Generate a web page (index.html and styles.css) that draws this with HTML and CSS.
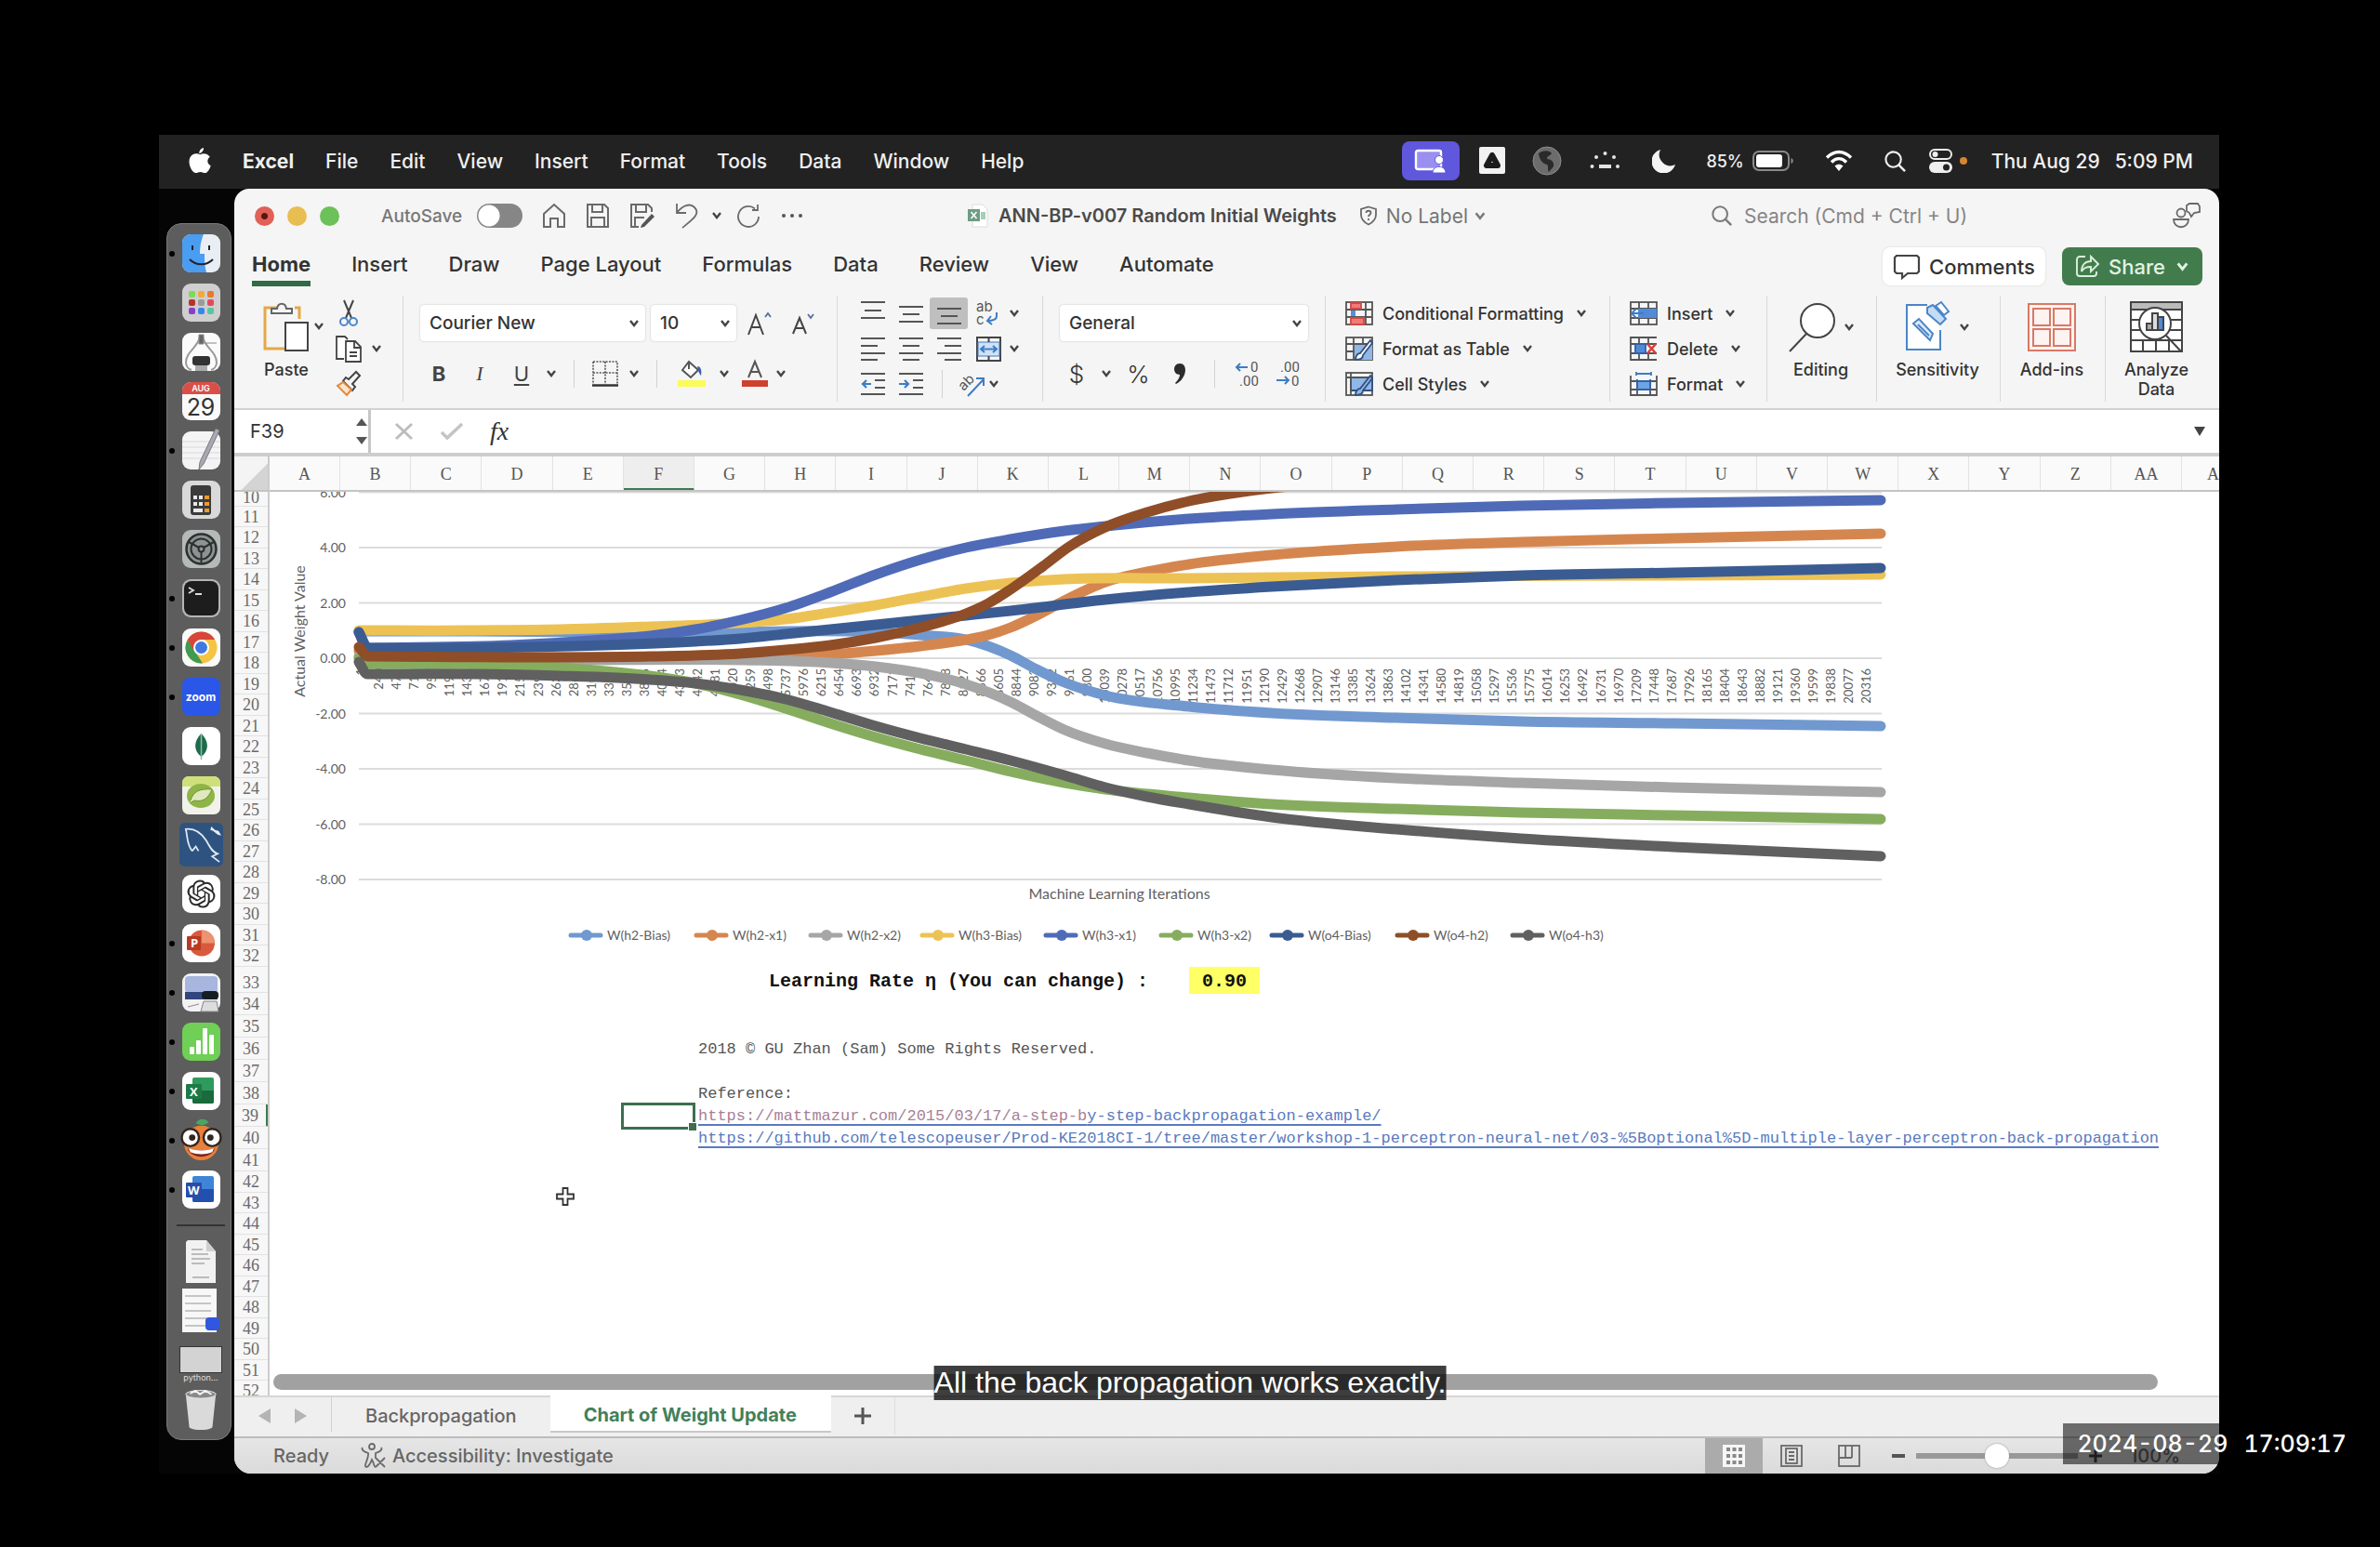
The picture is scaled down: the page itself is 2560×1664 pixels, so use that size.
FILE: index.html
```html
<!DOCTYPE html>
<html lang="en">
<head>
<meta charset="utf-8">
<title>ANN-BP-v007 Random Initial Weights</title>
<link rel="stylesheet" href="styles.css">
</head>
<body>
<svg class="defs" aria-hidden="true">
  <symbol id="chev" viewBox="0 0 12 10"><path d="M2 2l4 5 4-5" fill="none" stroke="currentColor" stroke-width="2.4"/></symbol>
  <symbol id="lens" viewBox="0 0 26 26"><circle cx="11" cy="11" r="8.5" fill="none" stroke="currentColor" stroke-width="2.2"/><path d="M17 17l7 7" stroke="currentColor" stroke-width="2.6"/></symbol>
</svg>

<div class="desktop">
  <header class="menubar">
    <nav class="menus">
      <svg class="apple" viewBox="0 0 24 29"><path fill="#fff" d="M16 0c.3 2.600-1.900 5.700-4.700 5.900C11 3.300 13.400.4 16 0zM22.800 9.800c-3.500 2.200-3.300 7.700.9 9.400-1 3.600-3.500 7.800-6.300 7.900-1.900 0-2.700-1.200-4.900-1.200s-3 1.200-4.800 1.200C4.500 27.200.5 20.500.5 15.200c0-9 8-10 11.800-7.900 3-1.700 7.800-1.500 10.500 2.500z"/></svg>
      <b>Excel</b><span>File</span><span>Edit</span><span>View</span><span>Insert</span><span>Format</span><span>Tools</span><span>Data</span><span>Window</span><span>Help</span>
    </nav>
    <div class="tray">
      <span class="sharing"><svg width="36" height="26" viewBox="0 0 36 26"><rect x="2" y="2" width="27" height="20" rx="2" fill="#9a90f0" stroke="#fff" stroke-width="2.400"/><path d="M20 26c0-9 14-9 14 0z" fill="#fff" stroke="#5f57dc"/><circle cx="27" cy="12" r="4.500" fill="#fff" stroke="#5f57dc"/></svg></span>
      <svg width="28" height="30" viewBox="0 0 28 30"><rect width="28" height="29" rx="2" fill="#f2f2f2"/><path d="M14 9L8 20h12z" fill="none" stroke="#1c1c1c" stroke-width="6" stroke-linejoin="round"/></svg>
      <svg class="globe" width="32" height="32" viewBox="0 0 32 32"><circle cx="16" cy="16" r="15" fill="#6c6c6c" stroke="#8c8c8c"/><path d="M7 8c6-4 12-3 14 0-2 3-5 2-5 6 5 0 8 4 7 8l-5 6c-2-3 0-6-2-8-5-1-8-5-9-12z" fill="#2a2a2a"/></svg>
      <svg class="dots" width="33" height="22" viewBox="0 0 33 22" fill="#e4e4e4"><circle cx="16.500" cy="3" r="2"/><circle cx="7" cy="7" r="2"/><circle cx="26" cy="7" r="2"/><circle cx="2.500" cy="17" r="2"/><circle cx="30" cy="17" r="2"/><rect x="10" y="15" width="13" height="4"/></svg>
      <svg class="moon" width="26" height="26" viewBox="0 0 26 26"><path d="M9 1a13 13 0 1 0 16 16A12 12 0 0 1 9 1z" fill="#f4f4f4"/></svg>
      <span class="battery">85%<svg width="45" height="24" viewBox="0 0 45 24"><rect x="1" y="2" width="38" height="20" rx="6" fill="none" stroke="#8a8a8a" stroke-width="2"/><rect x="4" y="5" width="28" height="14" rx="3" fill="#fff"/><path d="M41.500 9v6c3-1 3-5 0-6z" fill="#8a8a8a"/></svg></span>
      <svg class="wifi" width="30" height="24" viewBox="0 0 30 24" fill="none" stroke="#fff" stroke-width="3.400"><path d="M2 8.500c8-8 18-8 26 0M7 13.500c5-5 11-5 16 0"/><path d="M15 23l-4.500-5.500c3-2.500 6-2.500 9 0z" fill="#fff" stroke="none"/></svg>
      <svg class="find" width="25" height="25"><use href="#lens"/></svg>
      <svg class="control" width="42" height="26" viewBox="0 0 42 26"><rect x="1" y="1" width="23" height="10" rx="5" fill="none" stroke="#eee" stroke-width="2"/><circle cx="6.500" cy="6" r="3" fill="#eee"/><rect x="0" y="14" width="25" height="12" rx="6" fill="#eee"/><circle cx="18.500" cy="20" r="3.500" fill="#222"/><circle cx="37" cy="13" r="4" fill="#d8862e"/></svg>
      <span class="clock"><span>Thu Aug 29</span><span>5:09 PM</span></span>
    </div>
  </header>

  <div class="stage">
    <aside class="dock">
      <span class="app on"><svg viewBox="0 0 41 41"><rect width="41" height="41" rx="9" fill="#e9eef4"/><path d="M9 0h14c-3 7-4 14-4 21h5c0 7 0 13 2 20H9a9 9 0 0 1-9-9V9a9 9 0 0 1 9-9z" fill="#4a9df0"/><path d="M11 12v5M29 12v5" stroke="#223" stroke-width="2"/><path d="M8 27c7 7 18 7 25 0" fill="none" stroke="#223" stroke-width="2"/></svg></span>
      <span class="app"><svg viewBox="0 0 41 41"><rect width="41" height="41" rx="9" fill="#cfcfcf"/><g><rect x="7" y="8" width="7" height="7" rx="2" fill="#7ed957"/><rect x="17" y="8" width="7" height="7" rx="2" fill="#f2a93b"/><rect x="27" y="8" width="7" height="7" rx="2" fill="#e8792d"/><rect x="7" y="17" width="7" height="7" rx="2" fill="#b8332b"/><rect x="17" y="17" width="7" height="7" rx="2" fill="#9b9b9b"/><rect x="27" y="17" width="7" height="7" rx="2" fill="#e5485d"/><rect x="7" y="26" width="7" height="7" rx="2" fill="#8a3fc4"/><rect x="17" y="26" width="7" height="7" rx="2" fill="#3c86e8"/><rect x="27" y="26" width="7" height="7" rx="2" fill="#56c7a0"/></g></svg></span>
      <span class="app"><svg viewBox="0 0 41 41"><rect width="41" height="41" rx="9" fill="#fbfbfb"/><path d="M19 4C17 16 4 20 4 32c0 4 3 7 6 8M22 4c2 12 15 16 15 28 0 4-3 7-6 8" fill="none" stroke="#9a9a9a" stroke-width="2"/><path d="M18 2h5v10h-5zM25 11h12" fill="#666" stroke="#888"/><rect x="11" y="25" width="19" height="10" rx="3" fill="#333"/><path d="M14 35h13v6H14z" fill="#aaa"/></svg></span>
      <span class="app cal"><small>AUG</small><em>29</em></span>
      <span class="app on"><svg viewBox="0 0 41 41"><rect width="41" height="41" rx="9" fill="#f4f4f4"/><path d="M0 11h41M0 17h41M0 23h41M0 29h41" stroke="#d8d8de"/><path d="M36-3l4 2-17 36-5 6 1-8z" fill="#a9a9b4" stroke="#77777f"/></svg></span>
      <span class="app"><svg viewBox="0 0 41 41"><rect width="41" height="41" rx="9" fill="#d9d9d9"/><rect x="9" y="5" width="22" height="32" rx="3" fill="#3b3b3b"/><g fill="#e8e8e8"><rect x="12" y="16" width="4" height="4"/><rect x="18" y="16" width="4" height="4"/><rect x="12" y="23" width="4" height="4"/><rect x="18" y="23" width="4" height="4"/><rect x="12" y="30" width="10" height="4"/></g><g fill="#ee9a2f"><rect x="24" y="16" width="5" height="4"/><rect x="24" y="23" width="5" height="4"/><rect x="24" y="30" width="5" height="4"/></g></svg></span>
      <span class="app"><svg viewBox="0 0 41 41"><rect width="41" height="41" rx="9" fill="#b5bab9"/><circle cx="20.500" cy="20.500" r="16" fill="#8d9392" stroke="#2c3030" stroke-width="2.500"/><circle cx="20.500" cy="20.500" r="11" fill="none" stroke="#2c3030" stroke-width="2"/><circle cx="20.500" cy="20.500" r="3" fill="none" stroke="#2c3030" stroke-width="2"/><path d="M20.500 23.500v12M18 19L7 13M23 19l11-6" stroke="#2c3030" stroke-width="2"/></svg></span>
      <span class="app on"><svg viewBox="0 0 41 41"><rect width="41" height="41" rx="9" fill="#b5b5b5"/><rect x="2" y="2" width="37" height="37" rx="8" fill="#1d1d1d"/><path d="M7 9l5 3-5 3M14 16h7" fill="none" stroke="#ddd" stroke-width="1.800"/></svg></span>
      <span class="app on"><svg viewBox="0 0 41 41"><rect width="41" height="41" rx="9" fill="#fafafa"/><circle cx="20.500" cy="20.500" r="17" fill="#f5c443"/><path d="M5.800 12L14 25l8 12.400A17 17 0 0 1 5.800 12z" fill="#3f9b50"/><path d="M5.800 12A17 17 0 0 1 35.200 12H20.500L13 25z" fill="#d8453a"/><circle cx="20.500" cy="20.500" r="8.500" fill="#fff"/><circle cx="20.500" cy="20.500" r="6.500" fill="#3f78e0"/></svg></span>
      <span class="app on zoom">zoom</span>
      <span class="app"><svg viewBox="0 0 41 41"><rect width="41" height="41" rx="9" fill="#fff"/><path d="M20.500 7c8 8 9 18 0 25-9-7-8-17 0-25z" fill="#1e6a4c"/><path d="M20.500 7v28" stroke="#8fbba8" stroke-width="1.500"/></svg></span>
      <span class="app"><svg viewBox="0 0 41 41"><rect width="41" height="41" rx="7" fill="#f1f3ea"/><path d="M0 11V7a7 7 0 0 1 7-7h27a7 7 0 0 1 7 7v4z" fill="#cfe07a"/><ellipse cx="20" cy="21" rx="15" ry="13" fill="#8fb447"/><path d="M9 26c3-10 10-13 23-12-4 10-10 14-19 12l-5 3" fill="#dfe9bd" stroke="#6f9432"/></svg></span>
      <span class="app"><svg class="big" viewBox="0 0 48 48"><rect width="48" height="48" rx="6" fill="#2e5380"/><path d="M14 31C8 24 9 15 7 7c8-1 16 3 22 12 4 6 6 13 13 15l-6 3 8 6M14 31l4-5 3 5" fill="none" stroke="#dfe9f3" stroke-width="1.800"/><path d="M35 4l4 4 4 1 3 5-4-1-5-4-3-1z" fill="#e6edf5"/></svg></span>
      <span class="app"><svg viewBox="0 0 41 41"><rect width="41" height="41" rx="9" fill="#fff"/><path transform="translate(5.500 5.500) scale(1.250)" fill="#2b2b2b" d="M22.282 9.821a5.985 5.985 0 0 0-.516-4.911 6.046 6.046 0 0 0-6.510-2.900A6.065 6.065 0 0 0 4.981 4.182a5.985 5.985 0 0 0-3.998 2.900 6.046 6.046 0 0 0 .743 7.097 5.980 5.980 0 0 0 .511 4.911 6.051 6.051 0 0 0 6.515 2.900A5.985 5.985 0 0 0 13.260 24a6.056 6.056 0 0 0 5.772-4.206 5.989 5.989 0 0 0 3.998-2.900 6.056 6.056 0 0 0-.748-7.073zm-9.022 12.608a4.476 4.476 0 0 1-2.876-1.041l.142-.080 4.778-2.758a.795.795 0 0 0 .393-.681v-6.737l2.020 1.169a.071.071 0 0 1 .038.052v5.583a4.504 4.504 0 0 1-4.495 4.494zm-9.661-4.125a4.471 4.471 0 0 1-.535-3.014l.142.085 4.783 2.758a.771.771 0 0 0 .781 0l5.843-3.369v2.332a.080.080 0 0 1-.033.062L9.740 19.950a4.499 4.499 0 0 1-6.141-1.646zM2.341 7.896a4.485 4.485 0 0 1 2.366-1.973V11.600a.766.766 0 0 0 .388.677l5.814 3.354-2.020 1.169a.076.076 0 0 1-.071 0l-4.830-2.787A4.504 4.504 0 0 1 2.341 7.872zm16.596 3.856L13.104 8.364 15.119 7.200a.076.076 0 0 1 .071 0l4.830 2.791a4.494 4.494 0 0 1-.677 8.104v-5.677a.790.790 0 0 0-.407-.667zm2.011-3.023l-.142-.085-4.774-2.782a.776.776 0 0 0-.785 0L9.409 9.230V6.897a.066.066 0 0 1 .028-.062l4.830-2.787a4.499 4.499 0 0 1 6.680 4.660zM8.307 12.863l-2.020-1.164a.080.080 0 0 1-.038-.057V6.074a4.499 4.499 0 0 1 7.376-3.454l-.142.081L8.704 5.459a.795.795 0 0 0-.393.681zm1.098-2.365l2.602-1.500 2.607 1.500v2.999l-2.597 1.500-2.607-1.500Z"/></svg></span>
      <span class="app on"><svg viewBox="0 0 41 41"><rect width="41" height="41" rx="9" fill="#fff"/><circle cx="21" cy="20.500" r="14" fill="#d9593c"/><path d="M21 6.500a14 14 0 0 1 14 14H21z" fill="#ee9271"/><rect x="5" y="13" width="15" height="15" rx="1" fill="#b93a20"/><text x="9" y="25" class="glyph">P</text></svg></span>
      <span class="app on"><svg viewBox="0 0 41 41"><rect width="41" height="41" rx="9" fill="#f2f2f4"/><rect x="3" y="3" width="35" height="18" rx="4" fill="#a7b6de"/><path d="M3 20h35v8H3z" fill="#32467c"/><rect x="21" y="19" width="18" height="9" rx="4" fill="#151d22"/><path d="M6 36l12-3M20 41l3-11h14l2 11z" fill="#ddd" stroke="#888"/></svg></span>
      <span class="app on"><svg viewBox="0 0 41 41"><rect width="41" height="41" rx="9" fill="#6fcf57"/><g fill="#fff"><rect x="8" y="26" width="5" height="8" rx="1"/><rect x="15" y="19" width="5" height="15" rx="1"/><rect x="22" y="6" width="5" height="28" rx="1"/><rect x="29" y="13" width="5" height="21" rx="1"/></g></svg></span>
      <span class="app on"><svg viewBox="0 0 41 41"><rect width="41" height="41" rx="9" fill="#fff"/><rect x="11" y="6" width="23" height="28" rx="2" fill="#2f9a5d"/><path d="M11 20h23v12a2 2 0 0 1-2 2H13a2 2 0 0 1-2-2z" fill="#1b6a3c"/><rect x="4" y="13" width="17" height="16" rx="1" fill="#1d7a44"/><text x="8" y="26" class="glyph">X</text></svg></span>
      <span class="app on"><svg class="big" viewBox="0 0 48 48"><path d="M18 5c4-6 10-5 14-1-4 4-9 4-14 1z" fill="#4aa564"/><circle cx="24" cy="27" r="19" fill="#e9803a"/><circle cx="12" cy="21" r="9.500" fill="#fff" stroke="#33261e" stroke-width="2.500"/><circle cx="36" cy="21" r="9.500" fill="#fff" stroke="#33261e" stroke-width="2.500"/><circle cx="14" cy="21" r="3.500" fill="#33261e"/><circle cx="34" cy="21" r="3.500" fill="#33261e"/><path d="M9 33c10 3 20 3 30 0-3 12-27 12-30 0z" fill="#7d2320"/><path d="M10 33c10 3 18 3 28 0l-2 4c-8 3-16 3-24 0z" fill="#fff"/></svg></span>
      <span class="app on"><svg viewBox="0 0 41 41"><rect width="41" height="41" rx="9" fill="#fff"/><rect x="11" y="6" width="23" height="28" rx="2" fill="#3f84d8"/><path d="M11 20h23v12a2 2 0 0 1-2 2H13a2 2 0 0 1-2-2z" fill="#2250ae"/><rect x="4" y="13" width="17" height="16" rx="1" fill="#274fa8"/><text x="6" y="26" class="glyph">W</text></svg></span>
      <hr>
      <svg class="file" viewBox="0 0 32 46"><path d="M2 0h20l10 12v34H0V2z" fill="#f2f2f2"/><path d="M22 0v12h10z" fill="#cfcfcf"/><path d="M6 10h12M6 15h18M6 20h20M6 25h14M7 40h18" stroke="#bcbcbc" stroke-width="2"/></svg>
      <svg class="file note" viewBox="0 0 41 47"><path d="M0 0h37v47H0z" fill="#f7f7f7"/><path d="M3 8h28M3 16h28M3 24h28M3 32h24M3 40h22" stroke="#b5b5b5" stroke-width="1.500"/><rect x="25" y="31" width="15" height="14" rx="4" fill="#3157e0"/></svg>
      <span class="thumb"><i></i><small>python...</small></span>
      <svg class="trash" viewBox="0 0 36 46"><path d="M1 4h34l-4 38c-4 4-22 4-26 0z" fill="#dadada"/><ellipse cx="18" cy="5" rx="17" ry="4.500" fill="#8a8a8a" stroke="#e6e6e6"/><path d="M6 4l6-3 5 4 6-4 7 4" fill="none" stroke="#f4f4f4" stroke-width="2"/></svg>
    </aside>

    <main class="window">
      <div class="titlebar">
        <div class="quick">
          <span class="lights"><i class="red"></i><i class="amber"></i><i class="green"></i></span>
          <label class="autosave">AutoSave<input type="checkbox" class="switch"></label>
          <svg width="26" height="28" viewBox="0 0 26 28" class="ln"><path d="M2 12L13 2l11 10v14h-7v-9h-8v9H2z"/></svg>
          <svg width="26" height="28" viewBox="0 0 26 28" class="ln"><path d="M2 2h18l4 4v20H2zM7 2v8h11V2M6 26V16h14v10"/></svg>
          <svg width="28" height="28" viewBox="0 0 28 28" class="ln"><path d="M10 26H2V2h18l4 4v4M7 2v8h11V2M6 26V16h10"/><path d="M13 24L24 12l3 3-11 11-4 1z" fill="#555"/></svg>
          <svg width="26" height="30" viewBox="0 0 26 30"><path class="st" d="M2 2v10h10M2 12C8 4 16 1 21 6c7 7-2 13-13 22"/></svg>
          <svg class="c" width="12" height="10"><use href="#chev"/></svg>
          <svg class="redo" width="27" height="27" viewBox="0 0 27 27"><path class="st" d="M24 14a11 11 0 1 1-4-8.500M17 7h6V1"/></svg>
          <svg width="24" height="6" viewBox="0 0 24 6" fill="#555"><circle cx="3" cy="3" r="2"/><circle cx="12" cy="3" r="2"/><circle cx="21" cy="3" r="2"/></svg>
        </div>
        <div class="docname">
          <svg width="22" height="26" viewBox="0 0 22 26"><path d="M5 1h11l5 5v19H5z" fill="#fff" stroke="#ddd"/><rect x="0" y="6" width="13" height="13" fill="#6f9c85"/><path d="M3.500 9l6 7M9.500 9l-6 7" stroke="#fff" stroke-width="1.600"/><path d="M14 9h5v8h-5z" fill="#a8cdb8"/></svg>
          <span class="fname">ANN-BP-v007 Random Initial Weights</span>
          <svg width="20" height="22" viewBox="0 0 20 22"><path class="st" d="M10 1.500l8 2.500v6c0 5-3 8-8 10.500C5 18 2 15 2 10V4z"/><path class="st" d="M7.500 8c0-3 5-3 5 0 0 2-2.500 2-2.500 4M10 14v2"/></svg>
          <span class="nolabel">No Label</span><svg width="14" height="11" class="c dim"><use href="#chev"/></svg>
        </div>
        <div class="searchbar">
          <svg width="24" height="24" class="dim"><use href="#lens"/></svg>
          <input type="text" placeholder="Search (Cmd + Ctrl + U)" aria-label="Search">
          <svg width="30" height="28" viewBox="0 0 30 28"><g class="st"><circle cx="9" cy="11" r="4.500"/><path d="M1 18h16c0 11-16 11-16 0zM15 3l3-2h9l2 3v6l-6 1-3 4-2-4-3-2z"/></g></svg>
        </div>
      </div>

      <div class="tabs">
        <nav><a href="#" class="cur">Home</a><a href="#">Insert</a><a href="#">Draw</a><a href="#">Page Layout</a><a href="#">Formulas</a><a href="#">Data</a><a href="#">Review</a><a href="#">View</a><a href="#">Automate</a></nav>
        <button class="comments"><svg width="30" height="28" viewBox="0 0 30 28"><path d="M2 4l2-2h22l2 2v15l-2 2H16l-6 5v-5H4l-2-2z" fill="none" stroke="#444" stroke-width="2.200"/></svg>Comments</button>
        <button class="share"><svg width="27" height="25" viewBox="0 0 27 25" fill="none" stroke="#d9f0dd" stroke-width="1.900"><path d="M11 2H5a3 3 0 0 0-3 3v15a3 3 0 0 0 3 3h15a3 3 0 0 0 3-3v-2"/><path d="M17 2l8 8-8 8v-5c-5 0-8 1-10 5 0-7 4-11 10-11z"/></svg>Share<svg class="c" width="15" height="12"><use href="#chev"/></svg></button>
      </div>

      <div class="ribbon">
        <section class="g paste">
          <button class="bigbtn"><svg width="50" height="54" viewBox="0 0 50 54"><path d="M16 6H2v44h22M34 6h5v12" fill="none" stroke="#e6a748" stroke-width="3"/><path d="M9 12V7h6c1-7 9-7 10 0h6v5z" fill="#f5f5f5" stroke="#666" stroke-width="2"/><rect x="24" y="22" width="24" height="30" fill="#fff" stroke="#444" stroke-width="2"/></svg>Paste</button>
          <svg class="c side" width="12" height="10"><use href="#chev"/></svg>
          <div class="stack">
            <span><svg width="28" height="28" viewBox="0 0 28 28" fill="none" stroke="#444" stroke-width="2"><path d="M9 0l8 19M19 0l-8 19"/><g stroke="#4a86c8"><circle cx="9" cy="23" r="4"/><circle cx="19" cy="23" r="4"/></g></svg></span>
            <span><svg width="28" height="29" viewBox="0 0 28 29" fill="#fff" stroke="#444" stroke-width="1.800"><path d="M9 25H1V1h9l3 3"/><path d="M11 6h10l6 6v16H11zM20 6v7h7M15 18h8M15 22h8"/></svg><svg class="c" width="12" height="10"><use href="#chev"/></svg></span>
            <span><svg width="28" height="28" viewBox="0 0 28 28" fill="none" stroke="#444" stroke-width="2"><path d="M8 11l10 10 3-4-3-3 8-9-4-4-8 8-3-2z"/><path d="M8 12l-6 4 10 10 5-6z" fill="#fbe3cc" stroke="#e08a3c"/></svg></span>
          </div>
        </section>

        <section class="g font">
          <div class="line top">
            <label class="pick wide"><select aria-label="Font"><option>Courier New</option></select><svg class="c" width="12" height="10"><use href="#chev"/></svg></label>
            <label class="pick size"><select aria-label="Font size"><option>10</option></select><svg class="c" width="12" height="10"><use href="#chev"/></svg></label>
            <svg class="grow" width="27" height="26" viewBox="0 0 27 26"><path d="M1 25L9 4l8 21M4 17h10" fill="none" stroke="#444" stroke-width="2"/><path d="M19 6l3-4 3 4" fill="none" stroke="#556f9b" stroke-width="1.800"/></svg>
            <svg width="27" height="26" viewBox="0 0 27 26"><path d="M2 24L9 7l7 17M4 18h10" fill="none" stroke="#444" stroke-width="2"/><path d="M18 3l3 4 3-4" fill="none" stroke="#556f9b" stroke-width="1.800"/></svg>
          </div>
          <div class="line">
            <button class="w40"><b>B</b></button><button class="w48 it">I</button><button class="w42 un">U</button><svg class="c w22" height="10"><use href="#chev"/></svg><i class="sep"></i>
            <button class="w40"><svg width="28" height="28" viewBox="0 0 28 28" fill="none" stroke="#555"><path d="M1 1h26v24M1 1v24M14 1v24M1 13h26" stroke-width="1.600" stroke-dasharray="2 1.400"/><path d="M0 26.500h28" stroke="#333" stroke-width="2.500"/></svg></button><svg class="c w22" height="10"><use href="#chev"/></svg><i class="sep"></i>
            <button class="w48"><svg width="30" height="30" viewBox="0 0 30 30"><path d="M12 2l10 9-8 8-9-8zM12 2v8" fill="#fff" stroke="#555" stroke-width="2"/><path d="M21 7c4 0 5 5 4 10-2-2-3-5-4-10z" fill="#3d5fae"/><rect y="22" width="30" height="7" fill="#fbfb5a"/></svg></button><svg class="c w22" height="10"><use href="#chev"/></svg>
            <button class="w44"><svg width="28" height="30" viewBox="0 0 28 30"><path d="M7 19l7-17 7 17M9.500 13h9" fill="none" stroke="#555" stroke-width="2"/><rect y="22" width="28" height="7" fill="#d0402f"/></svg></button><svg class="c" width="12" height="10"><use href="#chev"/></svg>
          </div>
        </section>

        <section class="g align">
          <div class="stack">
            <span>
              <button class="w41"><svg class="bars" viewBox="0 0 26 26"><path d="M0 1h26M4 10h18M0 18h26"/></svg></button><button class="w41"><svg class="bars" viewBox="0 0 26 26"><path d="M0 6h26M4 14h18M0 22h26"/></svg></button><button class="w41 sel"><svg class="bars" viewBox="0 0 26 26"><path d="M0 8h26M4 16h18M0 24h26"/></svg></button>
              <button class="w44"><svg width="28" height="30" viewBox="0 0 28 30"><text x="1" y="13" class="ab">ab</text><text x="1" y="27" class="ab">c</text><path d="M23 14v4c0 4-4 5-10 5M17 18l-4 5 5 4" fill="none" stroke="#3e7cc4" stroke-width="2"/></svg></button><svg class="c" width="12" height="10"><use href="#chev"/></svg>
            </span>
            <span>
              <button class="w41"><svg class="bars" viewBox="0 0 26 26"><path d="M0 2h26M0 10h18M0 18h26M0 25h18"/></svg></button><button class="w41"><svg class="bars" viewBox="0 0 26 26"><path d="M0 2h26M4 10h18M0 18h26M4 25h18"/></svg></button><button class="w41"><svg class="bars" viewBox="0 0 26 26"><path d="M0 2h26M8 10h18M0 18h26M8 25h18"/></svg></button>
              <button class="w44"><svg width="27" height="27" viewBox="0 0 27 27" fill="none"><rect x="1" y="1" width="25" height="25" stroke="#444" stroke-width="2"/><rect x="2" y="6" width="23" height="15" fill="#cfe1f7" stroke="#3e7cc4"/><path d="M13.500 1v5M13.500 21v5" stroke="#444" stroke-width="2"/><path d="M5 13.500h17M9 10l-4 3.500L9 17M18 10l4 3.500-4 3.500" stroke="#3e7cc4" stroke-width="2"/></svg></button><svg class="c" width="12" height="10"><use href="#chev"/></svg>
            </span>
            <span>
              <button class="w41"><svg class="bars" viewBox="0 0 26 26"><path d="M0 2h26M15 9h11M15 17h11M0 24h26"/><path d="M11 13H1M6 9l-4 4 4 4" stroke="#3e7cc4"/></svg></button><button class="w41"><svg class="bars" viewBox="0 0 26 26"><path d="M0 2h26M15 9h11M15 17h11M0 24h26"/><path d="M0 13h10M6 9l4 4-4 4" stroke="#3e7cc4"/></svg></button><i class="sep"></i>
              <button class="w36"><svg width="30" height="28" viewBox="0 0 30 28"><text x="2" y="19" class="ab" transform="rotate(-45 8 15)">ab</text><path d="M11 27L28 9M20 8h8v8" fill="none" stroke="#3e7cc4" stroke-width="2"/></svg></button><svg class="c" width="12" height="10"><use href="#chev"/></svg>
            </span>
          </div>
        </section>

        <section class="g number">
          <div class="line top"><label class="pick full"><select aria-label="Number format"><option>General</option></select><svg class="c" width="12" height="10"><use href="#chev"/></svg></label></div>
          <div class="line">
            <button class="w36 sym">$</button><svg class="c w28" height="10"><use href="#chev"/></svg><button class="w41 sym">%</button><button class="w48"><svg width="14" height="22" viewBox="0 0 14 22"><path d="M7 0c9 0 8 16-4 22l-1-1c3-3 5-6 5-9C-1 12-1 0 7 0z" fill="#2c2c2c"/></svg></button><i class="sep"></i>
            <button class="w44"><svg width="28" height="30" viewBox="0 0 28 30"><text x="17" y="13" class="dec">0</text><text x="5" y="28" class="dec">.00</text><path d="M14 8H2M6 4L2 8l4 4" fill="none" stroke="#3e7cc4" stroke-width="2"/></svg></button>
            <button class="w44"><svg width="28" height="30" viewBox="0 0 28 30"><text x="5" y="13" class="dec">.00</text><text x="17" y="28" class="dec">0</text><path d="M1 22h13M10 18l4 4-4 4" fill="none" stroke="#3e7cc4" stroke-width="2"/></svg></button>
          </div>
        </section>

        <section class="g styles">
          <div class="stack">
            <button><svg class="grid" viewBox="0 0 30 26"><rect x="1" y="1" width="28" height="24"/><path d="M1 9h28M1 17h28M8 1v24M22 1v24"/><path d="M6 2h11v6H6zM6 18h14v7H6z" fill="#f07a78" stroke="#d04a48"/><path d="M6 10h5v6H6z" fill="#5a8fd6" stroke="none"/></svg>Conditional Formatting<svg class="c" width="12" height="10"><use href="#chev"/></svg></button>
            <button><svg class="grid" viewBox="0 0 30 26"><rect x="1" y="1" width="28" height="24"/><path d="M1 8h28M1 16h28M9 1v24M19 1v24"/><path d="M10 9h19v16H10z" fill="#8fb8e8" stroke="none"/><path d="M27 4L16 18c-2 0-5 2-5 7 5 0 8-2 8-5L29 7z" fill="#fff" stroke="#34507c"/></svg>Format as Table<svg class="c" width="12" height="10"><use href="#chev"/></svg></button>
            <button><svg class="grid" viewBox="0 0 30 26"><rect x="1" y="1" width="28" height="24"/><path d="M6 6h23v14H6z" fill="#8fb8e8" stroke="#34507c"/><path d="M6 1v24M1 6h28"/><path d="M27 4L16 18c-2 0-5 2-5 7 5 0 8-2 8-5L29 7z" fill="#8fb8e8" stroke="#34507c"/></svg>Cell Styles<svg class="c" width="12" height="10"><use href="#chev"/></svg></button>
          </div>
        </section>

        <section class="g cells">
          <div class="stack">
            <button><svg class="grid" viewBox="0 0 30 26"><rect x="1" y="1" width="28" height="24"/><path d="M1 8h28M1 18h28M10 1v24M20 1v24"/><path d="M9 8h20v10H9z" fill="#4f8bd8" stroke="none"/><path d="M15 13H2M7 8l-5 5 5 5" stroke="#3e7cc4"/></svg>Insert<svg class="c" width="12" height="10"><use href="#chev"/></svg></button>
            <button><svg class="grid" viewBox="0 0 30 26"><path d="M29 1H1v24h28M1 8h28M1 18h28M10 1v7M20 1v7M10 18v7M20 18v7"/><path d="M6 8h11v10H6z" fill="#4f8bd8" stroke="#2f62a8"/><path d="M19 8l9 10M28 8l-9 10" stroke="#d8413a" stroke-width="2.500"/></svg>Delete<svg class="c" width="12" height="10"><use href="#chev"/></svg></button>
            <button><svg class="grid" viewBox="0 0 30 26"><path d="M1 4v21h28V4M1 10h28M1 19h28M8 8v17M22 8v17"/><path d="M8 10h14v9H8z" fill="#6ea3e4" stroke="#2f62a8"/><path d="M7 2h16M7 0v4M23 0v4" stroke="#3e7cc4"/></svg>Format<svg class="c" width="12" height="10"><use href="#chev"/></svg></button>
          </div>
        </section>

        <section class="g one"><button class="bigbtn"><span><svg width="52" height="54" viewBox="0 0 52 54" fill="#fff" stroke="#444" stroke-width="2"><circle cx="32" cy="20" r="18"/><path d="M20 34L2 53"/></svg><svg class="c" width="12" height="10"><use href="#chev"/></svg></span>Editing</button></section>
        <section class="g one"><button class="bigbtn"><span><svg width="50" height="54" viewBox="0 0 50 54" fill="#fff" stroke="#4a86c8" stroke-width="2"><path d="M24 3H2v48h36V30"/><path d="M9 23l6-5 15 16-3 7z" fill="#dfeaf8"/><path d="M14 24l12 12"/><path d="M24 6l6-3 14 15-6 6-14-12z" fill="#c5dcf5"/><path d="M33 4l6-4 8 10-5 4z"/></svg><svg class="c" width="12" height="10"><use href="#chev"/></svg></span>Sensitivity</button></section>
        <section class="g one"><button class="bigbtn"><span><svg width="52" height="54" viewBox="0 0 52 54" fill="#fdf3f0" stroke="#d97866" stroke-width="2"><rect x="1" y="2" width="50" height="50"/><rect x="6" y="7" width="18" height="18"/><rect x="28" y="7" width="18" height="18"/><rect x="6" y="29" width="18" height="18"/><rect x="28" y="29" width="18" height="18"/></svg></span>Add-ins</button></section>
        <section class="g one last"><button class="bigbtn"><span><svg width="57" height="56" viewBox="0 0 57 56" fill="none" stroke="#444" stroke-width="2"><rect x="1" y="1" width="55" height="53" fill="#fff"/><rect x="1" y="1" width="55" height="8" fill="#bbb"/><path d="M1 20h55M1 31h55M1 42h55M14 42v12M28 42v12M42 42v12"/><circle cx="27" cy="24" r="17" fill="#fff"/><path d="M39 37l16 17"/><path d="M18 24h6v7h-6z" fill="#aaa"/><path d="M24 13h6v18h-6z" fill="#ddd"/><path d="M30 17h6v14h-6z" fill="#4f8bd8"/></svg></span>Analyze<br>Data</button></section>
      </div>

      <div class="formula">
        <label class="namebox"><input type="text" value="F39" aria-label="Name box"><svg width="12" height="28" viewBox="0 0 12 28" fill="#555"><path d="M6 0l6 8H0zM6 28l6-8H0z"/></svg></label>
        <svg class="fi" width="24" height="20" viewBox="0 0 24 20" fill="none" stroke="#bdbdbd" stroke-width="3"><path d="M3 2l17 16M20 2L3 18"/></svg>
        <svg class="fi" width="26" height="20" viewBox="0 0 26 20" fill="none" stroke="#c4c4c4" stroke-width="3.500"><path d="M2 11l6 6L24 2"/></svg>
        <span class="fx">fx</span>
        <input class="fin" type="text" aria-label="Formula">
        <svg width="12" height="10" viewBox="0 0 12 10"><path d="M0 0h12L6 10z" fill="#444"/></svg>
      </div>

      <div class="sheet">
        <div class="corner"></div>
        <div class="cols" id="cols"></div>
        <div class="rows" id="rows"></div>
        <div class="cells-area">
          <svg class="chart" viewBox="290 529 2097 511">
            <g id="grid"></g><g id="ticks"></g><g id="series"></g>
            <text class="axis" x="1204" y="967" text-anchor="middle">Machine Learning Iterations</text>
            <text class="axis" transform="translate(328 679) rotate(-90)" text-anchor="middle">Actual Weight Value</text>
            <g id="legend"></g>
          </svg>
          <div class="xl rate"><span>Learning Rate η (You can change) :</span><span class="hot">0.90</span></div>
          <div class="xl copy">2018 © GU Zhan (Sam) Some Rights Reserved.</div>
          <div class="xl">Reference:</div>
          <div class="xl picked"><i class="cell"></i><a href="#"><span>https://mattmazur.com/2015/03/17/a-step-b</span>y-step-backpropagation-example/</a></div>
          <div class="xl"><a href="#">https://github.com/telescopeuser/Prod-KE2018CI-1/tree/master/workshop-1-perceptron-neural-net/03-%5Boptional%5D-multiple-layer-perceptron-back-propagation</a></div>
          <svg class="cursor" viewBox="0 0 22 22"><path d="M8.500 2h5v6.500H20v5h-6.500V20h-5v-6.500H2v-5h6.500z" fill="#fff" stroke="#333" stroke-width="1.800"/></svg>
          <div class="hbar"></div>
        </div>
      </div>

      <div class="sheettabs">
        <svg class="nav" viewBox="0 0 52 16" fill="#b4b4b4"><path d="M13 0v16L0 8zM39 0v16l13-8z"/></svg>
        <button class="tab">Backpropagation</button>
        <button class="tab cur">Chart of Weight Update</button>
        <button class="add" aria-label="Add sheet"><svg width="20" height="20"><path d="M10 1v18M1 10h18" stroke="#555" stroke-width="3"/></svg></button>
      </div>

      <footer class="status">
        <span>Ready</span>
        <svg width="28" height="28" viewBox="0 0 28 28" class="st acc"><circle cx="12" cy="4" r="3"/><path d="M2 5c-2 3 3 5 6 6 1 5-4 12-3 14s4 1 7-7c3 5 2 8 4 8M22 5c2 3-3 5-6 6v6M16 16l10 10M26 16L16 26"/></svg>
        <span>Accessibility: Investigate</span>
        <div class="views">
          <button class="sel"><svg width="26" height="26" viewBox="0 0 26 26"><rect x="1" y="1" width="24" height="24" fill="#f6f6f6"/><path d="M5 6h17M5 13h17M5 20h17" stroke="#888" stroke-width="4" stroke-dasharray="4 2.500"/></svg></button>
          <button><svg width="26" height="26" viewBox="0 0 26 26" class="st"><rect x="2" y="2" width="22" height="22"/><rect x="7" y="5" width="12" height="16"/><path d="M10 9h6M10 13h6M10 17h6"/></svg></button>
          <button><svg width="26" height="26" viewBox="0 0 26 26" class="st"><rect x="2" y="2" width="22" height="22"/><path d="M9 2v13M16 2v13M2 15h14"/></svg></button>
        </div>
        <svg width="14" height="4"><path d="M0 2h14" stroke="#555" stroke-width="4"/></svg>
        <input type="range" min="0" max="100" value="50" aria-label="Zoom">
        <svg width="14" height="14"><path d="M7 0v14M0 7h14" stroke="#444" stroke-width="3"/></svg>
        <span class="pct">100%</span>
      </footer>
    </main>
  </div>
</div>

<p class="caption">All the back propagation works exactly.</p>
<time class="stamp"><span>2024-08-29</span> <span>17:09:17</span></time>
<script src="script.js"></script>
</body>
</html>
```
FILE: styles.css
```css
* { box-sizing: border-box; }
body { margin: 0; min-height: 100vh; position: relative; background: #000; padding: 145px 173px 79px 171px; font-family: Inter, "Liberation Sans", sans-serif; font-size: 20px; color: #333; }
button, input, select { font: inherit; color: inherit; background: none; border: 0; padding: 0; margin: 0; }
button { display: flex; align-items: center; justify-content: center; }
a { color: inherit; text-decoration: none; }
svg { flex: none; display: block; }
.defs { position: absolute; width: 0; height: 0; }
.c { color: #444; }
.dim { color: #7a7a7a; }
.st { fill: none; stroke: #6a6a6a; stroke-width: 1.8; }
.ln path { fill: none; stroke: #6a6a6a; stroke-width: 2; }
.ln path[fill] { fill: #555; stroke: none; }

.menubar { height: 58px; background: #222; color: #f0f0f0; display: flex; align-items: center; justify-content: space-between; padding: 0 28px 2px 32px; font-size: 21px; font-weight: 500; white-space: nowrap; }
.menus, .tray { display: flex; align-items: center; }
.menus { gap: 34px; }
.apple { width: 24px; height: 29px; }
.menus b { font-weight: 700; }
.sharing { width: 62px; height: 42px; border-radius: 8px; background: #5f57dc; display: flex; align-items: center; justify-content: center; margin-right: 21px; }
.globe { margin-left: 29px; }
.dots { margin-left: 30px; }
.moon { margin-left: 34px; }
.battery { display: flex; align-items: center; gap: 9px; margin-left: 32px; font-size: 18px; }
.wifi, .find { margin-left: 33px; }
.control { margin-left: 24px; }
.clock { display: flex; gap: 16px; margin-left: 25px; }

.stage { display: flex; align-items: flex-start; background: #050505; }
.dock { width: 70px; margin: 37px 3px 0 8px; padding: 11px 0 9px 4px; background: #5d5d5d; border: 1px solid #7a7a7a; border-radius: 16px; display: flex; flex-direction: column; align-items: center; gap: 12px; }
.app { position: relative; width: 41px; height: 41px; display: flex; align-items: center; justify-content: center; }
.app svg { width: 41px; height: 41px; overflow: visible; }
.app .big { width: 47px; height: 47px; }
.on::before { content: ""; position: absolute; left: -14px; top: 18px; width: 6px; height: 6px; border-radius: 50%; background: #000; }
.glyph { font: 700 13px "Open Sans", sans-serif; fill: #fff; }
.cal { flex-direction: column; background: #fafafa; border-radius: 9px; overflow: hidden; }
.cal small { width: 100%; background: #d94f47; color: #fff; text-align: center; font-size: 9px; line-height: 13px; font-weight: 600; }
.cal em { font-style: normal; font-size: 25px; line-height: 28px; }
.zoom { background: #2a57e8; border-radius: 8px; color: #fff; font-size: 12px; font-weight: 700; }
.dock hr { width: 52px; border: 0; border-top: 2px solid #333; margin: 5px 0 3px; }
.file { width: 32px; height: 46px; }
.note { width: 41px; height: 47px; margin-top: -6px; }
.thumb { display: flex; flex-direction: column; align-items: center; color: #ddd; margin-top: 3px; }
.thumb i { width: 46px; height: 29px; background: #d3d3d3; border: 1px solid #333; }
.thumb small { font-size: 9px; line-height: 10px; }
.trash { width: 36px; height: 44px; margin-top: -4px; }

.window { flex: 1; min-width: 0; background: #f5f5f5; border-radius: 16px 16px 18px 18px; overflow: hidden; }
.titlebar { height: 58px; display: grid; grid-template-columns: 789fr 785fr 561fr; align-items: center; white-space: nowrap; }
.quick, .docname, .searchbar, .lights, .autosave { display: flex; align-items: center; }
.quick { padding-left: 22px; gap: 21px; }
.lights { gap: 14px; margin-right: 24px; }
.lights i { width: 21px; height: 21px; border-radius: 50%; }
.red { background: radial-gradient(#5b1512 3px, #df6158 4px); }
.amber { background: #e8bd52; }
.green { background: #6cc158; }
.autosave { gap: 16px; color: #777; font-size: 19px; font-weight: 500; }
.switch { appearance: none; width: 49px; height: 26px; border-radius: 13px; background: radial-gradient(circle at 13px 13px, #fff 11px, #868686 12px); }
.quick .c { margin-left: -8px; }
.redo { margin-left: -6px; }
.fname { margin: 0 24px 0 11px; color: #4a4a4a; font-weight: 600; }
.nolabel { margin: 0 6px 0 9px; color: #757575; font-size: 21px; }
.searchbar { padding: 0 20px 0 14px; }
.searchbar input { flex: 1; min-width: 0; margin-left: 12px; outline: 0; font-size: 21px; }
.searchbar input::placeholder { color: #858585; opacity: 1; }

.tabs { height: 54px; display: flex; align-items: flex-start; padding: 5px 18px 0 19px; font-size: 22px; }
.tabs nav { display: flex; gap: 44px; flex: 1; white-space: nowrap; font-weight: 500; }
.tabs nav a { line-height: 36px; border-bottom: 6px solid transparent; }
.tabs nav .cur { font-weight: 700; border-color: #2f6b45; }
.comments, .share { height: 41px; border-radius: 8px; gap: 9px; font-weight: 500; }
.comments { width: 175px; background: #fff; box-shadow: 0 0 2px #ccc; margin-right: 18px; }
.share { width: 151px; background: #437c4c; color: #e2f3e5; }
.share .c { color: #e2f3e5; margin-left: 2px; }

.ribbon { height: 126px; padding: 3px 0 17px; border-bottom: 2px solid #d2d2d2; display: grid; grid-template-columns: 182fr 467fr 221fr 304fr 306fr 169fr 118fr 133fr 113fr 122fr; font-size: 18px; font-weight: 500; white-space: nowrap; }
.ribbon svg { overflow: visible; }
.g { border-right: 1px solid #d8d8d8; display: flex; min-width: 0; }
.bigbtn { flex-direction: column; justify-content: flex-start; padding-top: 7px; line-height: 21px; font-size: 18px; font-weight: 500; align-self: flex-start; }
.bigbtn > span { display: flex; align-items: center; gap: 8px; height: 54px; }
.bigbtn > svg, .bigbtn > span { margin-bottom: 8px; }
.one { justify-content: center; padding-right: 2px; }
.last { border: 0; padding-right: 13px; }
.stack { display: flex; flex-direction: column; }
.stack > * { height: 38px; display: flex; align-items: center; justify-content: flex-start; flex: none; }
.paste { padding-left: 31px; }
.side { margin: 28px 12px 0 4px; }
.paste .stack > * { gap: 10px; }
.font, .number { flex-direction: column; padding: 10px 0 0 18px; gap: 10px; }
.line { display: flex; align-items: center; height: 50px; flex: none; }
.top { height: 39px; gap: 6px; }
.pick { position: relative; height: 39px; background: #fff; border-radius: 4px; box-shadow: 0 0 2px #bbb; }
.pick select { appearance: none; width: 100%; height: 100%; padding: 0 10px; font-size: 19px; font-weight: 500; }
.pick .c { position: absolute; right: 6px; top: 15px; pointer-events: none; }
.wide { width: 242px; }
.size { width: 92px; }
.full { width: 267px; }
.grow { margin: 0 14px 0 6px; }
.w22 { width: 22px; } .w28 { width: 28px; } .w36 { width: 36px; } .w40 { width: 40px; } .w41 { width: 41px; } .w42 { width: 42px; } .w44 { width: 44px; } .w48 { width: 48px; }
.font button { font-size: 22px; color: #444; }
.it { font-family: "Liberation Serif", serif; font-style: italic; }
.un { text-decoration: underline; text-underline-offset: 3px; font-weight: 400; }
.sep { width: 1px; height: 30px; background: #d2d2d2; margin: 0 13px; flex: none; }
.align { padding-left: 17px; }
.bars { width: 26px; height: 26px; fill: none; stroke: #555; stroke-width: 2.2; }
.sel { background: #bfbfbf; border-radius: 3px; height: 34px; }
.ab { font: 15px Inter, sans-serif; fill: #555; }
.dec { font: 15px Roboto, sans-serif; fill: #555; }
.sym { font-size: 26px; font-weight: 300; color: #333; }
.styles, .cells { padding-left: 21px; }
.styles button, .cells button { gap: 10px; }
.grid { width: 30px; height: 26px; fill: none; stroke: #555; stroke-width: 1.8; }
.styles .c, .cells .c { margin-left: 3px; }

.formula { height: 50px; display: flex; align-items: center; background: #fff; border-bottom: 4px solid #cdcdcd; padding: 0 15px 0 0; }
.namebox { width: 147px; height: 46px; border-right: 3px solid #c6c6c6; display: flex; align-items: center; padding: 0 1px 0 17px; margin-right: 24px; }
.namebox input { flex: 1; min-width: 0; }
.fi { margin-right: 26px; }
.fx { font: italic 28px "Liberation Serif", serif; margin: 0 30px 0 2px; }
.fin { flex: 1; outline: 0; }

.sheet { height: 1010px; display: grid; grid-template: 38px 972px / 38px 1fr; background: #fff; }
.corner { background: linear-gradient(135deg, #f4f4f4 60%, #d4d4d4 60%); border-right: 2px solid #ccc; border-bottom: 2px solid #c4c4c4; }
.cols { display: grid; grid-template-columns: 76px repeat(26, 1fr) 40px; border-bottom: 2px solid #c4c4c4; background: #fafafa; font: 18px/39px "Liberation Serif", serif; color: #555; text-align: center; overflow: hidden; }
.cols span { border-right: 1px solid #e2e2e2; overflow: hidden; height: 36px; }
.cols .on-col { background: #eee; border-bottom: 3px solid #3d7a52; height: 37px; }
.cols span:last-child { padding-left: 27px; text-align: left; border: 0; }
.rows { background: #f7f7f7; border-right: 2px solid #ccc; font: 18px "Liberation Serif", serif; color: #6a6a6a; text-align: center; overflow: hidden; }
.rows div { height: 22px; line-height: 23px; border-bottom: 1px solid #e2e2e2; }
.rows div:nth-child(odd) { height: 23px; }
.rows div.first { height: 16px; line-height: 12px; }
.rows div.r33 { height: 28px; line-height: 34px; }
.rows div.tall { height: 24px; line-height: 24px; }
.rows div.on-row { border-right: 4px solid #3d7a52; margin-right: -2px; }
.rows div.end { height: 17px; }
.cells-area { position: relative; overflow: hidden; }
.chart { width: 100%; height: auto; }
.chart text { font: 14px Lato, sans-serif; fill: #5f5f5f; }
.chart .axis { font-size: 16px; }
.chart .tick { font-size: 13px; }
.gl { stroke: #dcdcdc; stroke-width: 2; }
.line-s { fill: none; stroke-width: 11; stroke-linecap: round; stroke-linejoin: round; }
.xl { height: 24px; line-height: 24px; padding-left: 461px; font-family: "Liberation Mono", monospace; font-size: 17px; color: #555; white-space: nowrap; display: flex; }
.rate { height: 29px; line-height: 31px; padding-left: 537px; font-size: 20px; font-weight: 700; color: #111; }
.hot { background: #ffff66; width: 76px; text-align: center; margin-left: 44px; }
.copy { margin: 48px 0 24px; }
.xl a { color: #5a7abf; text-decoration: underline; text-decoration-thickness: 2px; text-underline-offset: 4px; }
.xl a span { color: #a87f96; }
.picked { padding-left: 378px; }
.cell { width: 80px; height: 29px; margin: -3px 3px 0 0; border: 3px solid #3d6f50; flex: none; position: relative; }
.cell::after { content: ""; position: absolute; right: -5px; bottom: -5px; width: 8px; height: 8px; background: #3d6f50; border: 1px solid #fff; }
.cursor { position: absolute; left: 307px; top: 747px; width: 22px; height: 22px; }
.hbar { position: absolute; left: 4px; right: 66px; bottom: 6px; height: 17px; border-radius: 9px; background: #a1a1a1; }

.sheettabs { height: 46px; background: #efefef; border-top: 2px solid #d6d6d6; border-bottom: 2px solid #bcbcbc; display: flex; align-items: flex-start; padding-left: 26px; }
.nav { width: 52px; height: 16px; margin: 12px 26px 0 0; }
.tab { height: 37px; border-left: 1px solid #d0d0d0; padding: 3px 36px 0; color: #666; font-weight: 500; }
.sheettabs .cur { background: #fff; color: #42805a; font-weight: 700; border: 0; border-bottom: 2px solid #c8c8c8; margin-top: -2px; height: 40px; padding: 4px 37px 0 36px; }
.add { width: 69px; height: 40px; border-right: 1px solid #ddd; }
.status { height: 38px; background: linear-gradient(#e6e6e6, #dadada); display: flex; align-items: center; padding: 0 42px; color: #666; font-weight: 500; }
.acc { margin: 0 6px 0 34px; }
.views { display: flex; margin: 0 15px 0 auto; }
.views button { width: 62px; height: 38px; }
.views .sel { background: #ababab; border-radius: 0; }
.status input { appearance: none; width: 174px; height: 26px; margin: 0 12px; background: linear-gradient(#999, #999) center / 100% 6px no-repeat; }
.status input::-webkit-slider-thumb { appearance: none; width: 26px; height: 26px; border-radius: 50%; background: #fff; box-shadow: 0 0 2px #888; }
.pct { margin-left: 30px; }

.caption { position: absolute; left: 50%; bottom: 158px; transform: translateX(-50%); margin: 0; background: rgba(8, 8, 8, .78); color: #fff; font: 32px/37px "Liberation Sans", sans-serif; white-space: nowrap; }
.stamp { position: absolute; right: 0; bottom: 89px; display: flex; gap: 17px; background: rgba(0, 0, 0, .55); color: #fff; font-size: 25px; font-weight: 500; line-height: 44px; padding: 0 36px 0 15px; font-variant-numeric: tabular-nums; white-space: nowrap; }
```
FILE: script.js
```js
const SVG = 'http://www.w3.org/2000/svg';
function add(parent, tag, attrs, text) {
  const el = document.createElementNS(SVG, tag);
  for (const k in attrs) el.setAttribute(k, attrs[k]);
  if (text) el.textContent = text;
  document.getElementById(parent).appendChild(el);
}

// column and row headings
const cols = document.getElementById('cols');
[...'ABCDEFGHIJKLMNOPQRSTUVWXYZ', 'AA', 'AB'].forEach(name => {
  const s = document.createElement('span');
  s.textContent = name;
  if (name === 'F') s.className = 'on-col';
  cols.appendChild(s);
});
const rows = document.getElementById('rows');
for (let n = 10; n <= 52; n++) {
  const d = document.createElement('div');
  d.textContent = n;
  if (n === 10) d.className = 'first';
  if (n === 33) d.className = 'r33';
  if (n >= 34 && n <= 41) d.className = 'tall';
  if (n === 39) d.classList.add('on-row');
  if (n === 52) d.className = 'end';
  rows.appendChild(d);
}

// value axis
const zero = 708, unit = 29.75;
for (let v = 6; v >= -8; v -= 2) {
  const y = zero - v * unit;
  add('grid', 'line', { x1: 386, x2: 2024, y1: y, y2: y, class: 'gl' });
  add('grid', 'text', { x: 372, y: y + 5, 'text-anchor': 'end' }, v.toFixed(2));
}
// iteration axis, one label per 239 iterations
for (let k = 0; k < 86; k++) {
  const x = 393 + k * 19.05;
  add('ticks', 'text', { transform: `translate(${x} 719) rotate(-90)`, 'text-anchor': 'end', class: 'tick' }, String(1 + 239 * k));
}

const series = [
  ['W(h2-Bias)', '#7199d0', 611, [386,679,500,679,796,680,845,679,942,680,990,683,1039,688,1063,695,1087,705,1115,720,1145,734,1189,748,1279,760,1368,767,1502,772,1636,776,1800,778,2023,781]],
  ['W(h2-x1)', '#d5864f', 746, [386,700,400,707,700,707,845,706,893,704,942,700,990,695,1039,688,1063,683,1087,675,1115,662,1145,646,1189,626,1234,615,1279,607,1368,597,1502,588,1636,583,1800,579,2023,574]],
  ['W(h2-x2)', '#a6a6a6', 869, [386,706,400,710,600,710,800,710,893,713,942,717,990,724,1039,736,1087,755,1115,770,1145,785,1189,800,1234,810,1279,818,1368,828,1502,837,1636,842,1800,847,2023,852]],
  ['W(h3-Bias)', '#edc255', 989, [386,678,500,678,602,677,699,674,777,671,845,666,893,659,942,651,990,642,1039,633,1087,627,1145,623,1279,622,1500,620,1800,619,2023,618]],
  ['W(h3-x1)', '#4f6bb8', 1122, [386,680,396,697,550,694,651,688,699,684,748,677,796,667,845,654,893,637,942,618,990,602,1039,589,1087,580,1145,571,1189,566,1279,558,1368,553,1502,548,1636,544,1800,541,2023,538]],
  ['W(h3-x2)', '#86ad5e', 1246, [386,708,398,714,530,715,602,718,651,722,699,727,748,735,796,747,845,762,893,778,942,793,990,806,1039,818,1087,830,1145,842,1189,849,1279,858,1368,865,1502,870,1636,874,1800,877,2023,881]],
  ['W(o4-Bias)', '#3a5c92', 1365, [386,680,395,697,500,697,651,694,748,690,796,687,845,682,893,677,942,672,990,667,1039,662,1087,657,1189,645,1279,637,1368,631,1502,624,1636,619,1800,616,2023,611]],
  ['W(o4-h2)', '#8f4e28', 1500, [386,696,396,706,600,707,700,706,796,703,845,699,893,694,942,686,990,675,1039,660,1063,649,1087,634,1122,609,1150,588,1189,567,1234,551,1279,539,1323,531,1368,525,1412,521]],
  ['W(o4-h3)', '#606060', 1624, [386,712,395,725,500,725,602,727,699,731,748,735,796,742,845,752,893,766,942,781,990,794,1039,806,1087,818,1145,834,1189,847,1234,857,1279,865,1368,879,1502,892,1636,902,1800,911,2023,921]]
];

// cubic path whose tangents come from the neighbouring slopes;
// the sharp turn at the start uses a limited slope so it does not overshoot
function curve(p) {
  const n = p.length / 2, X = i => p[2 * i], Y = i => p[2 * i + 1];
  const h = i => X(i + 1) - X(i);
  const s = i => (Y(i + 1) - Y(i)) / h(i);
  const m = i => {
    if (i === 0) return s(0);
    if (i === n - 1) return s(n - 2);
    if (i === 1) return s(1);
    return (s(i - 1) * h(i) + s(i) * h(i - 1)) / (h(i) + h(i - 1));
  };
  let d = `M${X(0)} ${Y(0)}`;
  for (let i = 0; i < n - 1; i++) {
    const t = h(i) / 3;
    d += `C${X(i) + t} ${Y(i) + t * m(i)} ${X(i + 1) - t} ${Y(i + 1) - t * m(i + 1)} ${X(i + 1)} ${Y(i + 1)}`;
  }
  return d;
}
series.forEach(([name, color, x, pts]) => {
  add('series', 'path', { d: curve(pts), stroke: color, class: 'line-s' });
  add('legend', 'path', { d: `M${x + 3} 1006h32`, stroke: color, 'stroke-width': 5, 'stroke-linecap': 'round' });
  add('legend', 'circle', { cx: x + 20, cy: 1006, r: 6, fill: color });
  add('legend', 'text', { x: x + 42, y: 1011 }, name);
});
```
